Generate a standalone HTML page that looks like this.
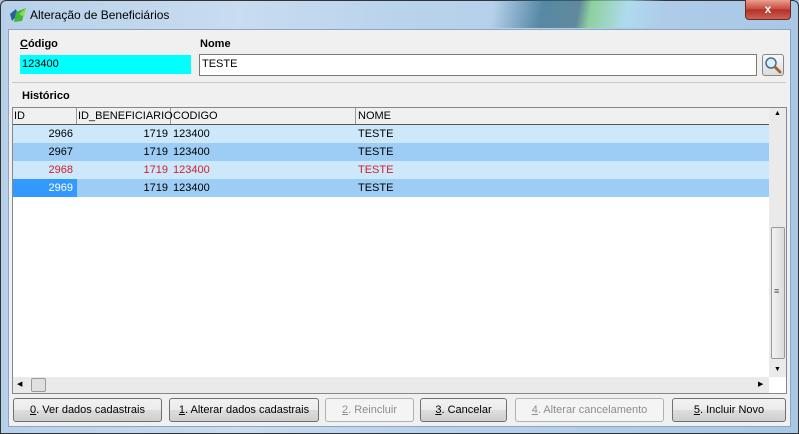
<!DOCTYPE html>
<html><head><meta charset="utf-8"><style>
*{box-sizing:border-box;margin:0;padding:0}
body{width:799px;height:434px;overflow:hidden;font-family:"Liberation Sans",sans-serif;font-size:11px;color:#000;position:relative;background:#a9c6e4;white-space:nowrap}
.abs{position:absolute}
#title{left:0;top:0;width:799px;height:434px;background:linear-gradient(90deg,#b7d0ea 0%,#c9dcf0 30%,#b9d3ec 50%,#a8c8e6 100%);border:1px solid #333;border-radius:6px 6px 0 0}
#client{left:8px;top:29px;width:783px;height:398px;background:#f0f0f0;border:1px solid #8ea5bf}
.lbl{font-weight:bold;font-size:11px}
.inp{border:1px solid #7a7a7a;background:#fff;height:21px;padding:3px 2px;font-size:11px}
.btn{top:398px;height:24px;border:1px solid #707070;border-radius:3px;background:linear-gradient(#f2f2f2,#ebebeb 50%,#dddddd 51%,#cfcfcf);text-align:center;line-height:22px;font-size:11px}
.dis{border-color:#adb2b5;background:#f4f4f4;color:#8d8d8d}
.row{position:absolute;left:13px;width:756px;height:18px;line-height:18px}
.row span{position:absolute;top:0}
.c1{left:0;width:64px;text-align:right;padding-right:4px}
.c2{left:65px;width:93px;text-align:right;padding-right:3px}
.c3{left:160px}
.c4{left:345px}
</style></head><body>
<div id="title" class="abs"></div>
<div class="abs" style="left:470px;top:0;width:240px;height:28px;background:linear-gradient(100deg,transparent 10%,#2f6b87 30%,#3d6c7e 45%,#7fd17f 50%,#aee0f0 65%,transparent 80%);opacity:.7"></div>
<svg class="abs" style="left:8px;top:6px" width="20" height="18" viewBox="0 0 20 18"><path d="M2 8 L8 3 L10 9 L4 15Z" fill="#2a5f9c"/><path d="M8 6 L18 2 L14 15 L6 16Z" fill="#3fb53a"/><path d="M11 8 L18 2 L16 11Z" fill="#8fdc4a"/></svg>
<div class="abs" style="left:30px;top:8px;font-size:12px">Alteração de Beneficiários</div>
<div class="abs" style="left:745px;top:0;width:46px;height:20px;border:1px solid #6b2a20;border-top:none;border-radius:0 0 4px 4px;background:linear-gradient(#e8a090,#c8463a 50%,#b0302a 51%,#d06050);color:#fff;font-weight:bold;text-align:center;line-height:18px;font-size:12px">x</div>
<div id="client" class="abs"></div>
<div class="abs lbl" style="left:20px;top:38px"><u>C</u>ódigo</div>
<div class="abs lbl" style="left:200px;top:38px">Nome</div>
<div class="abs" style="left:20px;top:55px;width:171px;height:19px;background:#00ffff;padding:3px 2px">123400</div>
<div class="abs inp" style="left:199px;top:54px;width:558px;height:22px">TESTE</div>
<div class="abs" style="left:762px;top:54px;width:22px;height:22px;border:1px solid #888;border-radius:3px;background:linear-gradient(#f8f8f8,#dcdcdc)"><svg width="20" height="20" viewBox="0 0 20 20"><circle cx="8" cy="8" r="5" fill="#d8f0ff" stroke="#4a6a88" stroke-width="1.5"/><path d="M12 12 L17 17" stroke="#a0683a" stroke-width="3" stroke-linecap="round"/></svg></div>
<div class="abs" style="left:12px;top:82px;width:774px;height:1px;background:#c8c8c8"></div>
<div class="abs lbl" style="left:22px;top:90px">Histórico</div>
<div class="abs" style="left:12px;top:107px;width:775px;height:287px;border:1px solid #828790;background:#fff"></div>
<div class="abs" style="left:13px;top:108px;width:756px;height:17px;background:#f0f0f0;border-bottom:1px solid #555"></div>
<div class="abs" style="left:13px;top:108px;width:64px;height:16px;border-right:1px solid #999;line-height:16px;padding-left:1px">ID</div>
<div class="abs" style="left:77px;top:108px;width:94px;height:16px;border-right:1px solid #999;line-height:16px;padding-left:1px">ID_BENEFICIARIO</div>
<div class="abs" style="left:171px;top:108px;width:185px;height:16px;border-right:1px solid #999;line-height:16px;padding-left:2px">CODIGO</div>
<div class="abs" style="left:356px;top:108px;width:200px;height:16px;line-height:16px;padding-left:2px">NOME</div>
<div class="row" style="top:125px;background:#cde8fa"><span class="c1">2966</span><span class="c2">1719</span><span class="c3">123400</span><span class="c4">TESTE</span></div>
<div class="row" style="top:143px;background:#9dcdf5"><span class="c1">2967</span><span class="c2">1719</span><span class="c3">123400</span><span class="c4">TESTE</span></div>
<div class="row" style="top:161px;background:#cde8fa;color:#d0202a"><span class="c1">2968</span><span class="c2">1719</span><span class="c3">123400</span><span class="c4">TESTE</span></div>
<div class="row" style="top:179px;background:#9dcdf5"><span class="c1" style="background:#3399ff;color:#fff;height:18px">2969</span><span class="c2">1719</span><span class="c3">123400</span><span class="c4">TESTE</span></div>
<div class="abs" style="left:769px;top:108px;width:17px;height:269px;background:#eaeaea"></div>
<div class="abs" style="left:771px;top:227px;width:14px;height:132px;border:1px solid #999;border-radius:2px;background:linear-gradient(90deg,#f2f2f2,#dcdcdc)"></div>
<div class="abs" style="left:774px;top:286px;font-size:9px;color:#555">≡</div>
<div class="abs" style="left:774px;top:110px;font-size:7px">▲</div>
<div class="abs" style="left:774px;top:366px;font-size:7px">▼</div>
<div class="abs" style="left:13px;top:377px;width:756px;height:16px;background:#eaeaea"></div>
<div class="abs" style="left:17px;top:380px;font-size:7px">◀</div>
<div class="abs" style="left:31px;top:378px;width:15px;height:14px;border:1px solid #999;border-radius:2px;background:#e0e0e0"></div>
<div class="abs" style="left:758px;top:380px;font-size:7px">▶</div>
<div class="abs btn" style="left:13px;width:149px"><u>0</u>. Ver dados cadastrais</div>
<div class="abs btn" style="left:169px;width:150px"><u>1</u>. Alterar dados cadastrais</div>
<div class="abs btn dis" style="left:325px;width:89px"><u>2</u>. Reincluir</div>
<div class="abs btn" style="left:420px;width:87px"><u>3</u>. Cancelar</div>
<div class="abs btn dis" style="left:515px;width:149px"><u>4</u>. Alterar cancelamento</div>
<div class="abs btn" style="left:672px;width:114px"><u>5</u>. Incluir Novo</div>
</body></html>
